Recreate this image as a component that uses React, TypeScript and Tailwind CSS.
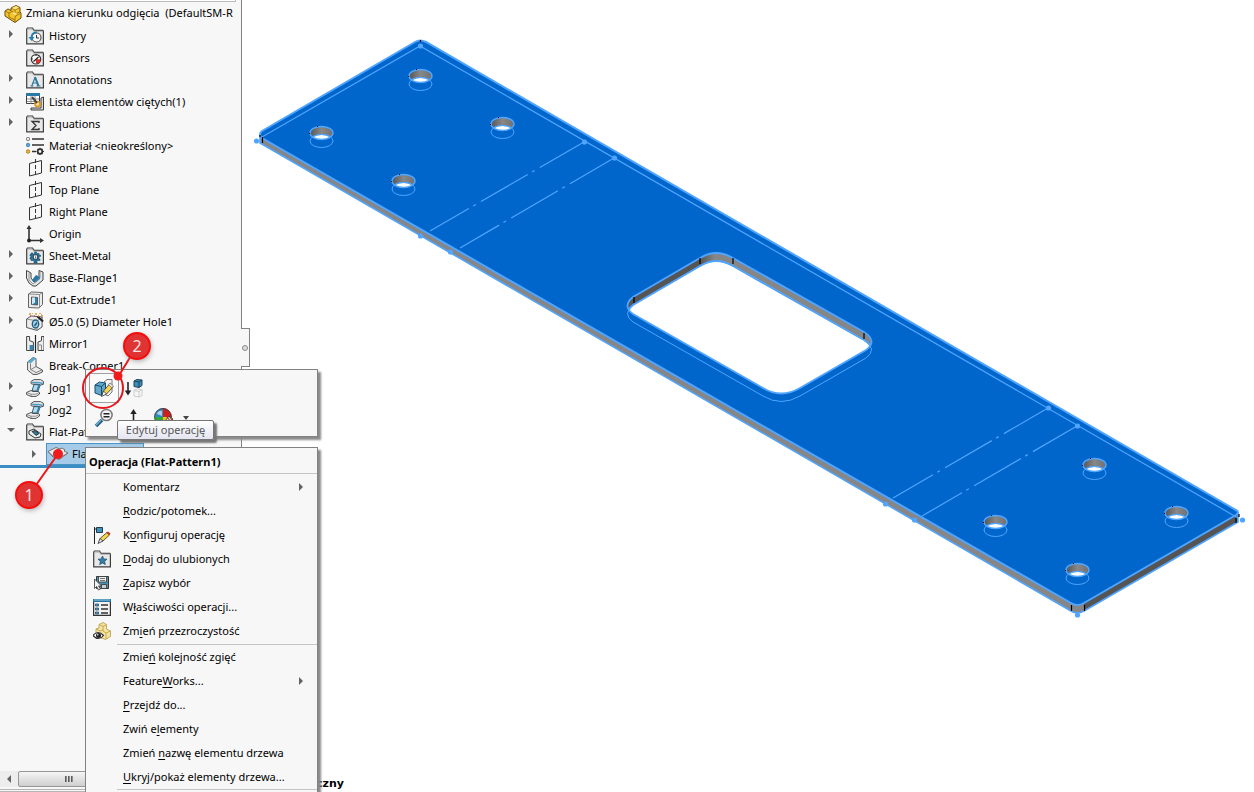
import React, { useState } from 'react';

type IconProps = { children?: React.ReactNode };

const Svg: React.FC<IconProps> = ({ children }) => (
  <svg viewBox="0 0 18 18" className="h-[18px] w-[18px] shrink-0" fill="none" aria-hidden="true">
    {children}
  </svg>
);

const Folder: React.FC<IconProps> = ({ children }) => (
  <Svg>
    <path d="M.7 16.8V2.2L1.5 1h5L8 3.4h8.8l.6.8v12.6z" fill="#e8e8e8" stroke="#3f3f3f" strokeWidth="1.2" />
    <path d="M1.5 2h5l1.2 2.2h9" stroke="#a8a8a8" />
    {children}
  </Svg>
);

const Plane = () => (
  <Svg>
    <path d="M3.5 4.5 15.5 1.5V14L3.5 17z" stroke="#333" />
    <path d="M9.5 0v18" stroke="#333" strokeDasharray="4 2" />
  </Svg>
);

const Jog = () => (
  <Svg>
    <path d="M5 2.500 8 .6h6.500l2.900 1.700v3L14.500 6 12 5.200H6.500L5 4.500z" fill="#e9e9e9" stroke="#3f3f3f" strokeWidth=".9" />
    <path d="M5.500 3.500h7.200l4 1" stroke="#4f9cc6" strokeWidth="1.500" />
    <path d="M8 5.500 6 12h6l2.200-6z" fill="#b5d8ea" stroke="#1f4e69" strokeWidth=".9" />
    <path d="m12.500 5.500-2.200 6H12l2.200-5.500z" fill="#2f81ae" />
    <path d="m.6 13.500 4.400-2L7 12.500h5.500l1 1v1.500L10 17.400H5L.6 15.500z" fill="#f1f1f1" stroke="#3f3f3f" strokeWidth=".9" />
    <path d="M.6 13.500 5 15.200h5l3.500-2M5 15.200v2" stroke="#777" strokeWidth=".8" />
  </Svg>
);

const icons: Record<string, React.ReactNode> = {
  part: (
    <Svg>
      <path d="m1 6 3-2 3 1.500V3l5-2.500 4 2V7l1 1v5l-6 4.500L1 11z" fill="#f5c52c" stroke="#6b4e08" />
      <path d="m1 6 4 2v4l6 3v2M5 8l3-1.500 4 2 4-1.500M7 5.500 8 6.500M7 3l4 2 5-2.500M11 5v3.500M11 15v-3.500l5-3" stroke="#8a6510" strokeWidth=".8" />
      <path d="m8 3 4-2 3 1.500-4 2zM8 8l2-1 3 1.500-2 1.500z" fill="#ffe487" />
    </Svg>
  ),
  history: (
    <Folder>
      <circle cx="10.500" cy="10.500" r="4.500" fill="#f8f8f8" stroke="#555" strokeWidth="1.200" />
      <path d="M10.500 8v3H13" stroke="#333" />
      <path d="M11 5.500C7 5 5.500 8 5.500 10.500" stroke="#2780b5" strokeWidth="1.800" />
      <path d="M2.500 10h6l-3 4z" fill="#2780b5" />
    </Folder>
  ),
  sensors: (
    <Folder>
      <circle cx="10" cy="10.300" r="4.700" fill="#fff" stroke="#333" strokeWidth="1.200" />
      <path d="M10 10.300h4.500a4.500 4.500 0 0 1-4.500 4.500z" fill="#d93028" />
      <path d="m7.500 12.500 5-4.500" stroke="#222" strokeWidth="1.300" />
      <path d="M10 6v1M6 10h1" stroke="#333" />
    </Folder>
  ),
  annotations: (
    <Folder>
      <path d="M9 6.500 5.800 15" stroke="#2b759d" strokeWidth="1.100" />
      <path d="m9 6 3.500 9" stroke="#2b759d" strokeWidth="2" />
      <path d="M6.700 12h4.500M4.500 15h3M10.500 15h4" stroke="#2b759d" />
    </Folder>
  ),
  cutlist: (
    <Svg>
      <path d="M.5.500h13v10H.5z" fill="#fff" stroke="#3f3f3f" />
      <path d="M0 0h14v3H0z" fill="#2879a5" />
      <path d="M1 6h12M1 8.500h12M5 3v8M9 3v8" stroke="#777" strokeWidth=".8" />
      <path d="M15 5v10H5v2h12.500V4z" fill="#d9d9d9" stroke="#3f3f3f" />
      <circle cx="11.500" cy="11" r="2.500" fill="#f7e4a8" stroke="#e29316" strokeWidth="1.600" />
      <path d="m6 4 5 6" stroke="#444" strokeWidth="2" />
    </Svg>
  ),
  equations: (
    <Folder>
      <path d="M13 8V6.500H6l4 4-4 4h7V13" stroke="#333" strokeWidth="1.300" />
    </Folder>
  ),
  material: (
    <Svg>
      <circle cx="2" cy="2" r="1.700" fill="#ededed" stroke="#555" strokeWidth=".7" />
      <circle cx="2" cy="8" r="1.800" fill="#53a6d5" stroke="#2b759d" strokeWidth=".7" />
      <circle cx="2" cy="14.500" r="1.800" fill="#efb52a" stroke="#9c6d09" strokeWidth=".7" />
      <path d="M6 2h12M6 8h12M6 14.500h4" stroke="#333" strokeWidth="1.600" />
      <circle cx="14" cy="14.500" r="2.300" stroke="#333" strokeWidth="1.800" />
      <path d="M14 10.700V12M14 17v1M10.500 14.500h1M16.700 14.500H18M11.500 12l1 1M15.500 16l1 1M16.500 12l-1 1M12.500 16l-1 1" stroke="#333" strokeWidth="1.200" />
    </Svg>
  ),
  plane: <Plane />,
  origin: (
    <Svg>
      <path d="M3 2v13.500h13" stroke="#333" strokeWidth="1.600" />
      <path d="m3 0 2.500 4h-5zM18 15.500 14 13v5z" fill="#333" />
      <circle cx="3" cy="15.500" r="2" fill="#222" />
    </Svg>
  ),
  sheetmetal: (
    <Folder>
      <path d="M5 6h2v1.500h1.500V5h2v1.500H13V8h1.500v1.500H13V12h1v1.500h-3V16H8v-2.500H5V12H4v-1.500h1V9H4V7.500h1z" fill="#2375a3" stroke="#174d6d" strokeWidth=".6" />
      <path d="M7.500 8h4v4h-4z" fill="#fff" stroke="#333" strokeWidth=".8" />
      <path d="M9 9.500h1.200v1.200H9z" fill="#333" />
    </Folder>
  ),
  flange: (
    <Svg>
      <path d="M.5 1.500 5 4v5l3 4 5-5V1.500l4 1.500v8l-7 6H7l-4-3-2.500-5z" fill="#e5e5e5" stroke="#444" />
      <path d="m6 11 4-5 4 2v2l-5 4z" fill="#2778a5" />
      <path d="M3 4v7l4 4 7-6V3" stroke="#888" strokeWidth=".8" />
    </Svg>
  ),
  cut: (
    <Svg>
      <path d="m2.500 3 3-2 11 .5v12L13 17l-10.500-.5z" fill="#ececec" stroke="#555" strokeWidth=".9" />
      <path d="m2.500 3 11 .5V17M13.500 3.500l3-2" stroke="#777" strokeWidth=".8" />
      <path d="m5.500 6 6 .5V14l-6-.5z" fill="#2d83b1" stroke="#444" strokeWidth=".8" />
      <path d="M6 6.500h3v5l-3 2z" fill="#cfe8f5" />
    </Svg>
  ),
  hole: (
    <Svg>
      <path d="m.6 6 4.500-3 11 1v10L11 17.400.6 14.500z" fill="#ececec" stroke="#444" strokeWidth=".9" />
      <path d="M.6 6 11 8v9.400M11 8l5-3.500" stroke="#777" strokeWidth=".8" />
      <ellipse cx="9.500" cy="11" rx="3.200" ry="4" fill="#a7d0e6" stroke="#235f80" strokeWidth="1.400" />
      <path d="m8.500 13 2.500-3.500" stroke="#235f80" strokeWidth="1.600" />
      <path d="m11.500 3.500 5.500 5" stroke="#222" strokeWidth="2.200" />
      <path d="M3 1h2M6 0h1M9 1h2M13 0h2M12 3h1M16 3h1" stroke="#e0951f" strokeWidth="1.700" />
      <path d="M4 3h1M8 3h1M15 2h1" stroke="#b94021" strokeWidth="1.200" />
    </Svg>
  ),
  mirror: (
    <Svg>
      <path d="M.6 1.500h3v4.200L7.400 7v8.500H.6zM18 1.500h-2.500v4.200L12 7v8.500h6z" fill="#eee" stroke="#444" />
      <path d="M3.600 10h3.500v5H3.600z" fill="#3386b3" />
      <path d="M13 10h2.500v5" stroke="#888" />
      <path d="M9.500 0v18" stroke="#222" strokeWidth="1.200" />
    </Svg>
  ),
  breakcorner: (
    <Svg>
      <path d="M1.600 5 7 .6l3 1V9.500l6.400 3.500v2L11 17.400H7L1.600 13z" fill="#ececec" stroke="#444" strokeWidth=".9" />
      <path d="M1.600 5 7 .6l3 1-5.500 5z" fill="#5ba9cf" />
      <path d="M4.500 6.600v5.900L10 15.500M10 9.500l-5 3M16 13l-6 2.500" stroke="#777" strokeWidth=".9" />
    </Svg>
  ),
  jog: <Jog />,
  flatfolder: (
    <Folder>
      <path d="m3 8 5-2 7 5-1 3-5 1-6-4z" fill="#e9f3f7" stroke="#333" />
      <path d="m6 8.500 3-1 4 3-3 2z" fill="#307c9d" stroke="#333" />
    </Folder>
  ),
  flat: (
    <svg viewBox="0 0 22 18" className="h-[18px] w-[22px] shrink-0" fill="none" aria-hidden="true">
      <path d="m1 6.500 8-4 4 1.500 2-1 3 2-1 1 4 2-9 6.500L6 12z" fill="#ededed" stroke="#666" strokeWidth=".9" />
      <path d="m6 7 5-2.500 4.500 3L11 11z" fill="#999" />
      <path d="m1 6.500 5 4.500 6 2 9-5" stroke="#777" strokeWidth=".8" />
    </svg>
  ),
  configure: (
    <Svg>
      <path d="M1.500 1v17" stroke="#222" />
      <path d="M3.500 1.500h6v5h-6z" fill="#4392bb" stroke="#203e50" />
      <path d="M1.500 3h2" stroke="#222" />
      <path d="m6 15.500 1.500-3.500 6.500-5.500 2.500 2.500-6.500 6z" fill="#f5d44c" stroke="#333" strokeWidth=".8" />
      <path d="m13.500 6.500 1.500-1 2.500 2-1.500 2z" fill="#c63326" />
      <path d="m5 17.500 2-5 3 2.500z" fill="#eee" stroke="#333" strokeWidth=".8" />
    </Svg>
  ),
  favorite: (
    <Folder>
      <path d="m9.500 6 1.300 2.900 3.200.3-2.400 2.100.7 3.200-2.800-1.600-2.800 1.600.7-3.200L5 9.200l3.200-.3z" fill="#347fa7" stroke="#174968" strokeWidth=".7" />
    </Folder>
  ),
  save: (
    <Svg>
      <path d="M3.500 2.500h12v12h-12z" fill="#4f91b1" stroke="#333" />
      <path d="M5.500 2.500h8V8h-8z" fill="#eee" stroke="#333" strokeWidth=".8" />
      <path d="M7 4.500h5M7 6.500h5" stroke="#777" />
      <path d="M8.500 10.500h5v4h-5z" fill="#ccc" stroke="#333" strokeWidth=".8" />
      <path d="M1.500 5v9.500l2-2L5.500 16l2-1-2-3h3z" fill="#f2f2f2" stroke="#333" strokeWidth=".8" />
    </Svg>
  ),
  properties: (
    <Svg>
      <path d="M.6 1.600h16.800v15.800H.6z" fill="#f2f2f2" stroke="#333" strokeWidth="1.200" />
      <path d="M0 1h18v3H0z" fill="#2373a0" />
      <path d="M1 2h16" stroke="#9ed0e8" />
      <path d="M2.500 6h3v2h-3zM2.500 10h3v2h-3zM2.500 14h3v2h-3z" fill="#53a6d5" stroke="#244b60" strokeWidth=".8" />
      <path d="M8 7h7M8 11h7M8 15h7" stroke="#333" strokeWidth="1.300" />
    </Svg>
  ),
  transparency: (
    <Svg>
      <path d="m3 7 3-1V2.500l4-2 3.500 2V7l4 2v5.500l-5 3L3 14z" fill="#f5e4a0" stroke="#c4a85c" />
      <path d="m6 2.500 4 2 3.500-2M10 4.500V9l3 2 4.500-2M13 11v6M3 7l4 2 3-1" stroke="#c4a85c" />
      <path d="M0 13.500c3-4 7-4 10.500 0-3 4-7 4-10.500 0z" fill="#fff" stroke="#333" strokeWidth="1.200" />
      <circle cx="5.500" cy="13.500" r="2.500" fill="#222" />
      <circle cx="4.800" cy="12.700" r=".7" fill="#fff" />
    </Svg>
  ),
  edit: (
    <svg viewBox="0 0 20 20" className="h-5 w-5" fill="none" aria-hidden="true">
      <path d="m10 4 3-2.500h5V14l-4 4-4-2z" fill="#f2f2f2" stroke="#777" />
      <path d="m1 7 4.500-3 6 1v8.500l-4 4L1 15z" fill="#62a8cd" stroke="#184b68" />
      <path d="m1 7 6.500 1.500 4-3.500M7.500 8.500v9" stroke="#184b68" />
      <path d="m8 17 1.500-4 6-7L19 9l-6.500 7z" fill="#f5d44c" stroke="#333" strokeWidth=".8" />
      <path d="m14.500 6.500 1.500-1.500 3.500 3-1.500 2z" fill="#e4e4e4" stroke="#555" strokeWidth=".6" />
      <path d="m7.500 18.500 2-5.500 3 3z" fill="#fff" stroke="#333" strokeWidth=".8" />
    </svg>
  ),
  suppress: (
    <svg viewBox="0 0 20 20" className="h-5 w-5" fill="none" aria-hidden="true">
      <path d="M4 4v11" stroke="#222" strokeWidth="1.600" />
      <path d="m.8 12.500 3.200 5 3.200-5z" fill="#222" />
      <path d="m10 3 3-1.500 5 .5v5.500l-3 2-5-1z" fill="#3e8cb5" stroke="#1c455d" />
      <path d="m10 3 5 1v5.500M15 4l3-2" stroke="#1c455d" />
      <path d="m10 12.500 3-1.500 5 .5v6L15 19l-5-1zM10 12.500l5 1V19M15 13.500l3-2" stroke="#ccc" />
    </svg>
  ),
  zoom: (
    <svg viewBox="0 0 20 20" className="h-5 w-5" fill="none" aria-hidden="true">
      <path d="m2 18 6-6" stroke="#245d7e" strokeWidth="3.600" />
      <path d="m2 17 5-5" stroke="#75b7da" strokeWidth="1.400" />
      <circle cx="12.500" cy="7" r="5.600" fill="#f3f3f3" stroke="#777" strokeWidth="1.500" />
      <path d="M9.500 5.700h6M9.500 8.700h6" stroke="#222" strokeWidth="1.600" />
    </svg>
  ),
  normal: (
    <svg viewBox="0 0 20 20" className="h-5 w-5" fill="none" aria-hidden="true">
      <path d="M9.500 4v13" stroke="#222" strokeWidth="1.600" />
      <path d="m9.500 1 3.200 5H6.300z" fill="#222" />
      <path d="m3 17 6.500-4 6.500 4-6.500 3z" fill="#4593bc" stroke="#204c63" />
    </svg>
  ),
  appearance: (
    <svg viewBox="0 0 20 20" className="h-5 w-5" fill="none" aria-hidden="true">
      <path d="M9 9V0a9 9 0 0 0-8.500 9z" fill="#3388c3" />
      <path d="M9 9V0a9 9 0 0 1 8.500 9z" fill="#cf2020" />
      <path d="M.5 9H9v9a9 9 0 0 1-8.500-9z" fill="#2aaa3d" />
      <path d="M9 9h8.500A9 9 0 0 1 9 18z" fill="#efc51c" />
      <circle cx="9" cy="9" r="8.500" stroke="#333" strokeWidth=".8" />
      <path d="M3 6c0-2 3-4 5-3v5z" fill="#fff" opacity=".6" />
      <path d="m11 13 4-5 4 3-5 5z" fill="#f2dcc2" stroke="#333" strokeWidth=".8" />
      <path d="m13 9 4 5M15 8l3 4" stroke="#802020" />
    </svg>
  ),
};

interface TreeNode {
  label: string;
  icon: string;
  arrow?: 'closed' | 'open';
}

const treeNodes: TreeNode[] = [
  { label: 'History', icon: 'history', arrow: 'closed' },
  { label: 'Sensors', icon: 'sensors' },
  { label: 'Annotations', icon: 'annotations', arrow: 'closed' },
  { label: 'Lista elementów ciętych(1)', icon: 'cutlist', arrow: 'closed' },
  { label: 'Equations', icon: 'equations', arrow: 'closed' },
  { label: 'Materiał <nieokreślony>', icon: 'material' },
  { label: 'Front Plane', icon: 'plane' },
  { label: 'Top Plane', icon: 'plane' },
  { label: 'Right Plane', icon: 'plane' },
  { label: 'Origin', icon: 'origin' },
  { label: 'Sheet-Metal', icon: 'sheetmetal', arrow: 'closed' },
  { label: 'Base-Flange1', icon: 'flange', arrow: 'closed' },
  { label: 'Cut-Extrude1', icon: 'cut', arrow: 'closed' },
  { label: 'Ø5.0 (5) Diameter Hole1', icon: 'hole', arrow: 'closed' },
  { label: 'Mirror1', icon: 'mirror' },
  { label: 'Break-Corner1', icon: 'breakcorner' },
  { label: 'Jog1', icon: 'jog', arrow: 'closed' },
  { label: 'Jog2', icon: 'jog', arrow: 'closed' },
  { label: 'Flat-Pattern', icon: 'flatfolder', arrow: 'open' },
];

// [before, access key, after]
interface MenuEntry {
  text: [string, string, string];
  icon?: string;
  submenu?: boolean;
}

const featureActions: MenuEntry[] = [
  { text: ['Komentarz', '', ''], submenu: true },
  { text: ['', 'R', 'odzic/potomek...'] },
  { text: ['K', 'o', 'nfiguruj operację'], icon: 'configure' },
  { text: ['', 'D', 'odaj do ulubionych'], icon: 'favorite' },
  { text: ['', 'Z', 'apisz wybór'], icon: 'save' },
  { text: ['W', 'ł', 'aściwości operacji...'], icon: 'properties' },
  { text: ['Zm', 'i', 'eń przezroczystość'], icon: 'transparency' },
];

const treeActions: MenuEntry[] = [
  { text: ['Zmie', 'ń', ' kolejność zgięć'] },
  { text: ['Feature', 'W', 'orks...'], submenu: true },
  { text: ['', 'P', 'rzejdź do...'] },
  { text: ['Zwiń e', 'l', 'ementy'] },
  { text: ['Zmień ', 'n', 'azwę elementu drzewa'] },
  { text: ['', 'U', 'kryj/pokaż elementy drzewa...'] },
];

const Arrow: React.FC<{ open?: boolean }> = ({ open }) => (
  <svg viewBox="0 0 8 8" className="h-2 w-2" aria-hidden="true">
    <path d={open ? 'M0 2h8L4 6z' : 'M2 0v8l4-4z'} fill="#646464" />
  </svg>
);

const TreeRow: React.FC<{ node: TreeNode }> = ({ node }) => (
  <li className="flex h-[22px] items-center">
    <span className="flex w-[26px] shrink-0 pb-1 pl-[7px]">
      {node.arrow && (
        <button type="button" aria-label={node.label} aria-expanded={node.arrow === 'open'}>
          <Arrow open={node.arrow === 'open'} />
        </button>
      )}
    </span>
    {icons[node.icon]}
    <span className="ml-[5px] whitespace-nowrap">{node.label}</span>
  </li>
);

const MenuItem: React.FC<{ entry: MenuEntry }> = ({ entry }) => (
  <button type="button" role="menuitem" className="flex h-6 w-full items-center pr-3 text-left hover:bg-[#d5e7f5]">
    <span className="flex w-[37px] shrink-0 pl-[7px]">{entry.icon && icons[entry.icon]}</span>
    <span className="flex-1 whitespace-pre">
      {entry.text[0]}
      <span className="underline underline-offset-2">{entry.text[1]}</span>
      {entry.text[2]}
    </span>
    {entry.submenu && <Arrow />}
  </button>
);

const holes = [
  [420, 76],
  [321, 133],
  [502, 124],
  [403, 181],
  [1094, 465],
  [1176, 513],
  [995, 522],
  [1077, 570],
];

const vertices = [
  [420, 46],
  [256, 141],
  [584, 142],
  [614, 158],
  [420, 236],
  [450, 252],
  [1048, 408],
  [1077, 426],
  [885, 504],
  [914, 520],
  [1242, 520],
  [1077, 615],
];

const bendLines = ['M584 142 430 231', 'M614 158 460 248', 'M1048 408 893 498', 'M1077 426 922 516'];

const windowPath =
  'M633 297 700 258Q716 248 733 258L864 332Q878 341 866 350L800 388Q781 399 763 388L633 314Q622 306 633 297Z';

const Model = () => (
  <svg viewBox="242 0 1012 792" className="h-full w-full" preserveAspectRatio="xMinYMin meet" role="img" aria-label="Flat-Pattern1">
    <defs>
      <linearGradient id="holeWall">
        <stop offset="0" stopColor="#555" />
        <stop offset=".5" stopColor="#888" />
        <stop offset="1" stopColor="#707070" />
      </linearGradient>
      <linearGradient id="windowWall" gradientUnits="userSpaceOnUse" x1="627" y1="0" x2="871" y2="0">
        <stop offset="0" stopColor="#555" />
        <stop offset=".3" stopColor="#555" />
        <stop offset=".36" stopColor="#868686" />
        <stop offset="1" stopColor="#868686" />
      </linearGradient>
      <clipPath id="windowClip">
        <path d={windowPath} />
      </clipPath>
      <clipPath id="holeClip">
        <ellipse rx="11.500" ry="6.500" />
      </clipPath>
    </defs>

    {/* side walls */}
    <path d="M260 134V143L1071 611Q1077 615 1084 611V600z" fill="#868686" />
    <path d="M1084 602V611L1238 522V512z" fill="#555" />
    <path d="M260 135V143L1071 611Q1077 615 1084 611L1238 522V512" stroke="#4fa5ff" strokeWidth="1.600" fill="none" />

    {/* top face */}
    <path
      d="M415 42Q420 39 426 42L1236 510Q1240 512 1236 515L1084 603Q1077 607 1071 603L262 138Q258 134 262 131Z"
      fill="#06c"
      stroke="#4fa5ff"
      strokeWidth="2"
    />
    <path d="M262 137 420 46 1238 518" stroke="#4fa5ff" strokeWidth="1.200" fill="none" />
    {bendLines.map(d => (
      <path key={d} d={d} stroke="#4fa5ff" strokeWidth="1.200" strokeDasharray="54 6 3 5" strokeDashoffset="3" />
    ))}

    {/* rectangular window */}
    <path d={windowPath} fill="url(#windowWall)" />
    <g clipPath="url(#windowClip)">
      <path d={windowPath} transform="translate(0 8)" fill="#fff" stroke="#4fa5ff" strokeWidth="2" />
    </g>
    <path d={windowPath} transform="translate(0 8)" stroke="#4fa5ff" strokeWidth="1" fill="none" />
    <path d={windowPath} stroke="#4fa5ff" strokeWidth="1.800" fill="none" />
    <path d="M700 258v6M733 258v6M634 297v6M864 333v6" stroke="#000" strokeWidth="1.200" />

    {holes.map(([x, y]) => (
      <g key={x} transform={`translate(${x + 0.5} ${y})`}>
        <ellipse rx="11.500" ry="6.500" fill="url(#holeWall)" />
        <g clipPath="url(#holeClip)">
          <ellipse cy="8" rx="11.500" ry="6.500" fill="#fff" stroke="#4fa5ff" strokeWidth="1.200" />
        </g>
        <ellipse cy="8" rx="11.500" ry="6.500" stroke="#4fa5ff" strokeWidth="1" fill="none" />
        <ellipse rx="11.500" ry="6.500" stroke="#4fa5ff" strokeWidth="1.400" fill="none" />
        <path d="M-12 0v1M-4 -7v1" stroke="#111" />
      </g>
    ))}

    <path d="M262.500 137v6M1071.500 605v6M1084.500 605v6M1236 518v5M420.500 40v2M260 135v2M1239 514v3" stroke="#000" strokeWidth="1.200" />
    {vertices.map(([x, y]) => (
      <circle key={`${x}-${y}`} cx={x + 0.5} cy={y} r="2.600" fill="#4fa5ff" />
    ))}
  </svg>
);

const toolButton = 'flex h-[30px] w-[30px] items-center justify-center';

const ContextToolbar = () => (
  <div role="toolbar" className="relative h-[68px] border border-[#828282] bg-[#f7f7f7] p-[3px] shadow-[3px_3px_2px_#8a8a8a]">
    <div className="flex">
      <button type="button" aria-label="Edytuj operację" className={`${toolButton} border border-[#a0a0a0] bg-[#fafafa]`}>
        {icons.edit}
      </button>
      <button type="button" aria-label="Wygaś" className={toolButton}>{icons.suppress}</button>
    </div>
    <div className="flex items-center">
      <button type="button" aria-label="Powiększ do wyboru" className={toolButton}>{icons.zoom}</button>
      <button type="button" aria-label="Prostopadle do" className={toolButton}>{icons.normal}</button>
      <button type="button" aria-label="Wyglądy" className={toolButton}>{icons.appearance}</button>
      <svg viewBox="0 0 6 4" className="ml-1 h-1 w-1.5" aria-hidden="true">
        <path d="M0 0h6L3 4z" fill="#444" />
      </svg>
    </div>
    <div role="tooltip" className="absolute left-[31px] top-[50px] flex h-5 w-[97px] items-center justify-center whitespace-nowrap rounded-xs border border-[#767676] bg-linear-to-b from-white to-[#e4e5f0] text-[#575757] shadow-[3px_3px_2px_#777]">
      Edytuj operację
    </div>
  </div>
);

const ContextMenu = () => (
  <div role="menu" className="border border-[#828282] bg-[#f7f7f7] shadow-[3px_3px_2px_#8a8a8a]">
    <h2 className="mb-px flex h-[26px] items-center border-b border-[#c5c5c5] pl-[3px] pt-1 font-bold">Operacja (Flat-Pattern1)</h2>
    {featureActions.map(entry => (
      <MenuItem key={entry.text.join('')} entry={entry} />
    ))}
    <hr className="mt-px ml-[31px] border-0 border-t border-[#c5c5c5]" />
    {treeActions.map(entry => (
      <MenuItem key={entry.text.join('')} entry={entry} />
    ))}
    <hr className="ml-[31px] border-0 border-t border-[#c5c5c5] pb-3" />
  </div>
);

const badge = 'absolute flex h-7 w-7 items-center justify-center rounded-full border-2 border-[#f60d0d] bg-[#e03333] text-base text-[#fde4e4] shadow-[1px_2px_4px_#8888]';

// numbered steps drawn over the window
const Callouts = () => (
  <div className="pointer-events-none absolute left-0 top-0">
    <svg width="170" height="520" viewBox="0 0 170 520" fill="none" aria-hidden="true">
      <circle cx="103" cy="388" r="20" stroke="#e8141c" strokeWidth="2" />
      <path d="m137 346-19 31M29 495l29-41" stroke="#f01515" strokeWidth="2" />
      <circle cx="118" cy="376" r="4.500" fill="#ee1c1c" />
      <circle cx="58" cy="454" r="5" fill="#ee1c1c" />
    </svg>
    <span className={`${badge} left-[123px] top-[332px]`}>2</span>
    <span className={`${badge} left-[15px] top-[481px]`}>1</span>
  </div>
);

export default function App() {
  const [menuOpen, setMenuOpen] = useState(true);

  return (
    <div className="relative flex h-screen w-full overflow-hidden bg-white font-['Noto_Sans','Open_Sans',sans-serif] text-[11px] text-black">
      <aside className="relative flex w-[242px] shrink-0 flex-col border-r border-[#828282] bg-[#f7f7f7]">
        <div className="mr-[5px] h-[2px] border-b border-r border-[#bbb] bg-white" />
        <div className="flex h-[23px] items-center overflow-hidden pl-1">
          {icons.part}
          <span className="ml-1 whitespace-pre">{'Zmiana kierunku odgięcia  (DefaultSM-R'}</span>
        </div>
        <ul>
          {treeNodes.map(node => (
            <TreeRow key={node.label} node={node} />
          ))}
          <li className="flex h-[22px] items-center">
            <span className="flex w-[46px] pl-[30px]">
              <Arrow />
            </span>
            <button
              type="button"
              onClick={() => setMenuOpen(!menuOpen)}
              className="flex h-[22px] w-[98px] items-center gap-[3px] overflow-hidden whitespace-nowrap border border-[#4795c5] bg-[#a6cbe9]"
            >
              {icons.flat}
              Flat-Pattern1
            </button>
          </li>
        </ul>
        <div className="h-[3px] bg-[#3c8dc4]" />
        <div className="mt-auto flex h-4 items-center bg-[#ededed]">
          <span className="flex w-[18px] rotate-180 justify-center">
            <Arrow />
          </span>
          <div className="flex h-4 w-[101px] items-center justify-center gap-px rounded-xs border border-[#979797] bg-linear-to-b from-[#f5f5f5] to-[#cfcfcf]">
            <span className="h-1.5 w-0.5 bg-linear-to-r from-[#444] to-[#aaa]" />
            <span className="h-1.5 w-0.5 bg-linear-to-r from-[#444] to-[#aaa]" />
            <span className="h-1.5 w-0.5 bg-linear-to-r from-[#444] to-[#aaa]" />
          </div>
        </div>
        <div className="mt-0.5 h-[3px] border-y border-[#b5b5b5]" />
        <button
          type="button"
          aria-label="Zwiń panel"
          className="absolute left-[241px] top-[328px] flex h-[39px] w-[9px] items-center justify-center border border-l-0 border-[#828282] bg-[#f7f7f7]"
        >
          <span className="h-1.5 w-1.5 rounded-full border border-[#888] bg-[#ddd]" />
        </button>
      </aside>

      <main className="relative min-w-0 flex-1">
        <Model />
        <span className="absolute bottom-0 left-[74px] font-['DejaVu_Sans',sans-serif] font-bold leading-4">czny</span>
      </main>

      {menuOpen && (
        <div className="absolute left-[85px] top-[369px] flex w-[233px] flex-col gap-[10px]">
          <ContextToolbar />
          <ContextMenu />
        </div>
      )}
      <Callouts />
    </div>
  );
}
